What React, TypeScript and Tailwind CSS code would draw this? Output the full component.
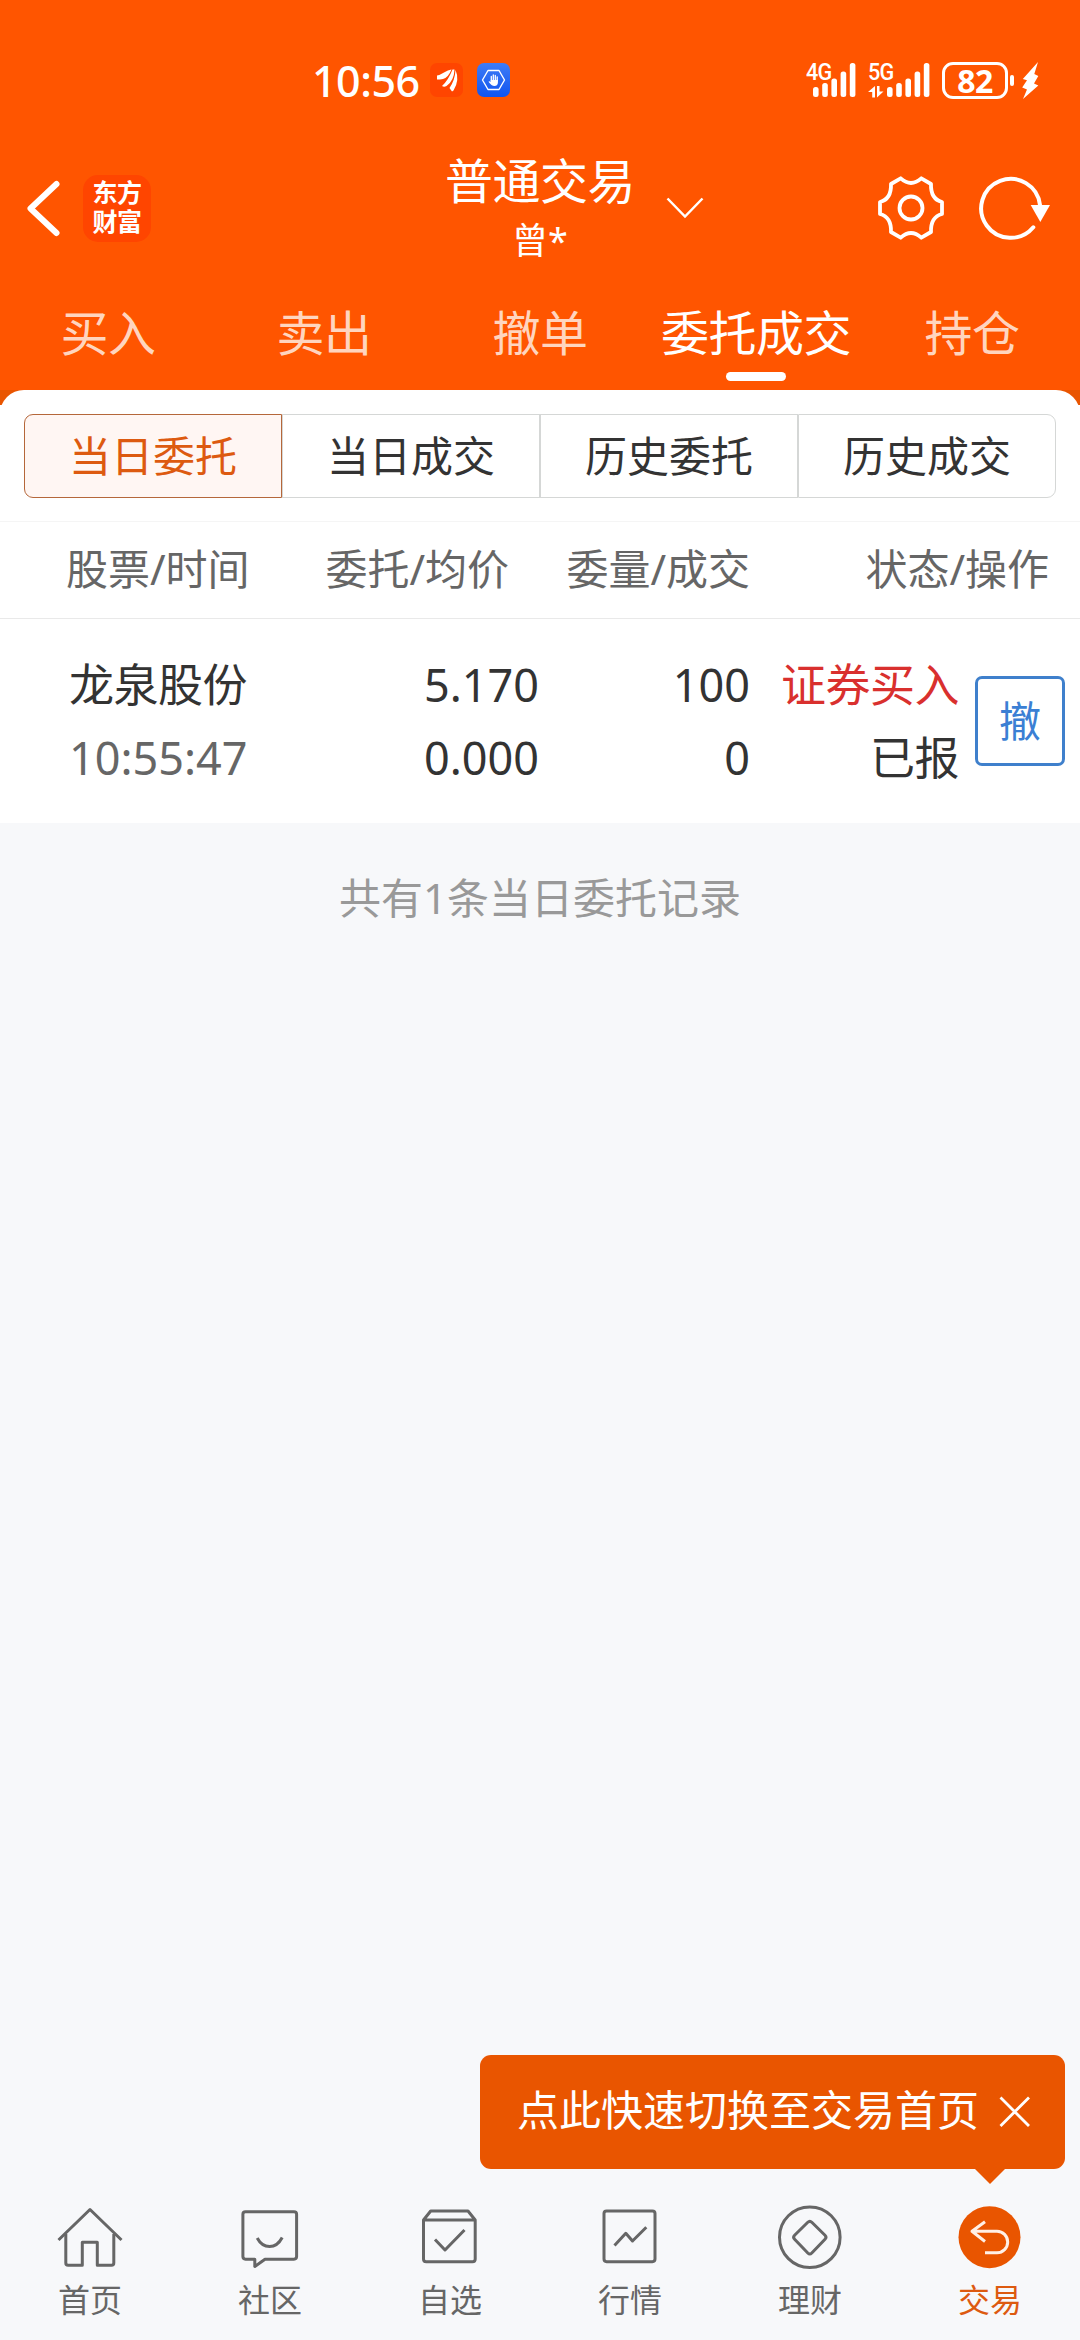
import type { ReactNode } from "react";

type Order = {
  name: string;
  time: string;
  price: string;
  avgPrice: string;
  amount: string;
  filled: string;
  side: string;
  status: string;
};

const tabs = ["买入", "卖出", "撤单", "委托成交", "持仓"];
const segments = ["当日委托", "当日成交", "历史委托", "历史成交"];

const orders: Order[] = [
  {
    name: "龙泉股份",
    time: "10:55:47",
    price: "5.170",
    avgPrice: "0.000",
    amount: "100",
    filled: "0",
    side: "证券买入",
    status: "已报",
  },
];

const navItems: { label: string; icon: ReactNode }[] = [
  {
    label: "首页",
    icon: (
      <>
        <path d="M4.5 39 36 8.5 67.5 39" />
        <path d="M11.8 33v29q0 2.3 2.3 2.3H28.3V41.3H43.3V64.3H57.5q2.3 0 2.3-2.3V33" />
      </>
    ),
  },
  {
    label: "社区",
    icon: (
      <>
        <path d="M11.5 10.7H60q2.6 0 2.6 2.6V55.6q0 2.6-2.6 2.6H31L20.8 65.5V58.2H11.5q-2.6 0-2.6-2.6V13.3q0-2.6 2.6-2.6Z" />
        <path d="M23.2 37q4.5 8.5 12.4 8.5T48.2 36.5" />
      </>
    ),
  },
  {
    label: "自选",
    icon: (
      <>
        <path d="M9.5 19V58q0 2.7 2.7 2.7H58.5q2.7 0 2.7-2.7V19L54 10H16.7L9.5 19ZM9.5 19H61.2" />
        <path d="M21 38.5 31 49 50.5 29" />
      </>
    ),
  },
  {
    label: "行情",
    icon: (
      <>
        <rect x="10" y="10" width="51" height="50.7" rx="2.6" />
        <path d="M20.5 44.5 31.8 32.3 38.5 40 52.3 26.3" />
      </>
    ),
  },
  {
    label: "理财",
    icon: (
      <>
        <circle cx="35.8" cy="36.2" r="30.3" />
        <path d="M33.8 21.3q2-2 4 0L51 34.2q2 2 0 4L37.8 52q-2 2-4 0L20.6 38.2q-2-2 0-4Z" />
      </>
    ),
  },
  {
    label: "交易",
    icon: (
      <>
        <circle cx="35.5" cy="36.2" r="31" fill="#e95500" stroke="none" />
        <path
          d="M31 20.8 18 30.3 31 40.5M19 30.3H43a10.7 10.7 0 0 1 0 21.4H31"
          stroke="#fff0e6"
        />
      </>
    ),
  },
];

function SignalBars() {
  return (
    <svg className="h-[34px] w-[43px]" viewBox="0 0 43 34" fill="#fff">
      <rect x="0" y="24" width="5.6" height="10" rx="2.5" />
      <rect x="9.2" y="20" width="5.6" height="14" rx="2.5" />
      <rect x="18.4" y="15.5" width="5.6" height="18.5" rx="2.5" />
      <rect x="27.6" y="8.5" width="5.6" height="25.5" rx="2.5" />
      <rect x="36.8" y="0" width="5.6" height="34" rx="2.5" />
    </svg>
  );
}

function StatusBar() {
  return (
    <div className="flex h-[110px] items-start pt-[63px] pl-[312px]">
      <span className="h-[34px] w-[118px] text-[43px] leading-[35px] font-medium tracking-[-0.5px]">
        10:56
      </span>
      <svg className="h-[34px] w-[33px]" viewBox="0 0 33 34">
        <rect width="33" height="34" rx="7" fill="#ff4500" />
        <g fill="#fff">
          <path d="M7 16.500V12.500Q10 12 14 9.500 18 7 21.500 6.500 18 15 13 16 10 16.500 7 16.500Z" />
          <path d="M12 23Q18.500 17 22.500 6.500L24.500 6.500Q24 18 16.500 23 14 24.500 12 23Z" />
          <path d="M19.500 25Q25 17 25.500 7 30 17 23.500 27.500L22 28.500Z" />
        </g>
      </svg>
      <svg className="ml-[14px] h-[34px] w-[33px]" viewBox="0 0 33 34">
        <defs>
          <linearGradient id="guard" x1="0" y1="0" x2="0" y2="1">
            <stop offset="0" stopColor="#3f7cf6" />
            <stop offset="1" stopColor="#1054f0" />
          </linearGradient>
        </defs>
        <rect width="33" height="34" rx="7" fill="url(#guard)" />
        <path
          d="M11 7.5H22L27.500 17 22 26.500H11L5.500 17Z"
          fill="none"
          stroke="#fff"
          strokeWidth="1.4"
          strokeLinejoin="round"
        />
        <path
          d="M14.300 18V13.500M16.300 17V12M18.300 17V12.400M20.200 18V14"
          stroke="#fff"
          strokeWidth="1.3"
          strokeLinecap="round"
        />
        <path
          d="M13.700 17H20.900V20Q20.500 23 17.500 23 14.500 23 11.500 18.800 12.500 17.800 13.700 19Z"
          fill="#fff"
        />
      </svg>

      <div className="ml-[296px] flex">
        <div className="relative w-[62px] pl-[7px]">
          <span className="absolute top-0 left-0 origin-left scale-x-90 font-['Roboto',sans-serif] text-[24px] leading-[18px] font-medium tracking-[-1px]">
            4G
          </span>
          <SignalBars />
        </div>
        <div className="relative w-[74px] pl-[19px]">
          <span className="absolute top-0 left-0 origin-left scale-x-90 font-['Roboto',sans-serif] text-[24px] leading-[18px] font-medium tracking-[-1px]">
            5G
          </span>
          <svg
            className="absolute top-[23px] left-0 h-[12px] w-[16px]"
            viewBox="0 0 16 12"
            fill="#fff"
          >
            <path d="M7 0V11.5H4.200V6H0Z" />
            <path d="M9 11.5V0H11.500V5.500H15.500Z" />
          </svg>
          <SignalBars />
        </div>
        <div className="-mt-px flex h-[37px] w-[66px] items-center justify-center rounded-[11px] border-[3px] border-white text-[32px] leading-none font-bold tracking-[-0.5px]">
          82
        </div>
        <div className="mt-[12px] ml-[2px] h-[11px] w-[4px] rounded-sm bg-white" />
        <svg
          className="-mt-px ml-[8px] h-[37px] w-[17px]"
          viewBox="0 0 17 37"
          fill="#fff"
        >
          <path d="M16 0 .8 17 5 18.300.2 25.500 5 27.500 1 37 16.300 23.500 12 21.500 16.300 14 12.300 12Z" />
        </svg>
      </div>
    </div>
  );
}

function TitleBar() {
  return (
    <div className="grid h-[196px] grid-cols-[1fr_auto_1fr] items-center">
      <div className="flex items-center pl-[24px]">
        <svg
          className="h-[60px] w-[40px]"
          viewBox="0 0 40 60"
          fill="none"
          stroke="#fff"
          strokeWidth="6"
          strokeLinecap="round"
          strokeLinejoin="round"
        >
          <path d="M32.5 6 6.5 30.5 32.5 55" />
        </svg>
        <div className="ml-[19px] flex h-[67px] w-[68px] flex-col justify-center rounded-[15px] bg-[#ff4500] text-center font-['Liberation_Sans','Noto_Sans_CJK_SC',sans-serif] text-[25px] leading-[29px] font-bold tracking-[-0.5px]">
          <span>东方</span>
          <span>财富</span>
        </div>
      </div>

      <div className="pt-[6px] text-center">
        <h1 className="text-[48px] leading-[60px] tracking-[-0.5px]">
          普通交易
        </h1>
        <p className="text-[36px] leading-[60px]">曾*</p>
      </div>

      <div className="flex items-center">
        <svg
          className="ml-[30px] h-[24px] w-[40px]"
          viewBox="0 0 40 24"
          fill="none"
          stroke="#fff"
          strokeWidth="2.5"
        >
          <path d="M2.5 2.5 20 20.5 37.5 2.5" />
        </svg>
        <svg
          className="ml-auto h-[72px] w-[72px]"
          viewBox="0 0 72 72"
          fill="none"
          stroke="#fff"
          strokeWidth="3.8"
          strokeLinejoin="round"
        >
          <path d="M46.3 6.3 56 12Q55.5 27 67 30V42Q55.5 45 56 60L46.3 65.7Q36 56.5 25.7 65.7L16 60Q16.5 45 5 42V30Q16.5 27 16 12L25.7 6.3Q36 15.5 46.3 6.3Z" />
          <circle cx="36" cy="36" r="11.5" />
        </svg>
        <svg
          className="mr-[29px] ml-[28px] h-[72px] w-[76px]"
          viewBox="0 0 76 72"
          fill="none"
        >
          <path
            d="M65 33A29.5 29.5 0 1 0 58.3 55.3"
            stroke="#fff"
            strokeWidth="4"
            strokeLinecap="round"
          />
          <path d="M55.7 33H75L65.3 50Z" fill="#fff" />
        </svg>
      </div>
    </div>
  );
}

function App() {
  return (
    <div className="flex h-[2340px] w-[1080px] flex-col overflow-hidden bg-[#f7f8fa] font-['Noto_Sans','Noto_Sans_CJK_SC',sans-serif] text-[#333333]">
      <header className="h-[390px] shrink-0 bg-[#ff5500] text-white">
        <StatusBar />
        <TitleBar />
        <nav className="grid grid-cols-5">
          {tabs.map((tab) => (
            <div key={tab} className="flex flex-col items-center">
              <span
                className={`text-[48px] leading-[54px] tracking-[-0.5px] whitespace-nowrap ${tab === "委托成交" ? "text-white" : "text-[#ffd5bf]"}`}
              >
                {tab}
              </span>
              {tab === "委托成交" && (
                <span className="mt-[12px] h-[9px] w-[60px] rounded-full bg-white" />
              )}
            </div>
          ))}
        </nav>
      </header>

      <main className="bg-[linear-gradient(#e95500_15px,#ffffff_15px)]">
        <div className="rounded-t-[24px] bg-white">
          <div className="flex h-[131px] px-[24px] pt-[24px]">
            {segments.map((segment, i) => (
              <div
                key={segment}
                className={`h-[84px] flex-1 border text-center text-[42px] leading-[82px] first:rounded-l-[9px] last:rounded-r-[9px] ${i === 0 ? "border-[#b5673a] bg-[#fff6f3] text-[#dd5a10]" : "border-[#d5d7d6]"}`}
              >
                {segment}
              </div>
            ))}
          </div>

          <div className="flex h-[98px] items-center border-y border-t-[#f5f5f5] border-b-[#e9e9e9] pb-[3px] text-[42px] text-[#666666]">
            <span className="w-[260px] pl-[66px]">股票/时间</span>
            <span className="w-[249px] text-right">委托/均价</span>
            <span className="w-[241px] text-right">委量/成交</span>
            <span className="w-[299px] text-right">状态/操作</span>
          </div>

          {orders.map((order) => (
            <div
              key={order.time}
              className="flex h-[204px] items-start pt-[29px] text-[45px] leading-[73px]"
            >
              <div className="w-[260px] pl-[69px]">
                <p className="tracking-[-0.5px]">{order.name}</p>
                <p className="text-[#666666]">{order.time}</p>
              </div>
              <div className="w-[279px] text-right">
                <p>{order.price}</p>
                <p>{order.avgPrice}</p>
              </div>
              <div className="w-[211px] text-right">
                <p>{order.amount}</p>
                <p>{order.filled}</p>
              </div>
              <div className="w-[209px] text-right tracking-[-0.5px]">
                <p className="text-[#d9302e]">{order.side}</p>
                <p>{order.status}</p>
              </div>
              <button className="mt-[28px] ml-[16px] h-[90px] w-[90px] rounded-[7px] border-[3px] border-[#3f80cc] text-[42px] leading-[84px] text-[#3b7fd4]">
                撤
              </button>
            </div>
          ))}
        </div>
      </main>

      <p className="mt-[44px] text-center text-[42px] leading-[62px] text-[#999999]">
        共有1条当日委托记录
      </p>

      <div className="relative mt-auto mr-[15px] flex h-[114px] w-[585px] items-center self-end rounded-[11px] bg-[#e95500] pl-[37px] text-[42px] text-white">
        <span className="mb-[5px]">点此快速切换至交易首页</span>
        <svg
          className="ml-[19px] h-[34px] w-[34px]"
          viewBox="0 0 34 34"
          stroke="#fff"
          strokeWidth="2.8"
        >
          <path d="M2.5 2.5 31 31M31 2.5 2.5 31" />
        </svg>
        <svg
          className="absolute top-[113px] left-[494px] h-[16px] w-[32px]"
          viewBox="0 0 32 16"
          fill="#e95500"
        >
          <path d="M0 0H32L16 16Z" />
        </svg>
      </div>

      <footer className="grid h-[171px] shrink-0 grid-cols-6 pt-[32px]">
        {navItems.map((item) => (
          <div key={item.label} className="flex flex-col items-center">
            <svg
              className="h-[72px] w-[72px]"
              viewBox="0 0 72 72"
              fill="none"
              stroke="#666666"
              strokeWidth="3"
              strokeLinejoin="round"
            >
              {item.icon}
            </svg>
            <span
              className={`mt-[7px] text-[32px] leading-[40px] ${item.label === "交易" ? "text-[#dd5a10]" : "text-[#666666]"}`}
            >
              {item.label}
            </span>
          </div>
        ))}
      </footer>
    </div>
  );
}

export default App;
